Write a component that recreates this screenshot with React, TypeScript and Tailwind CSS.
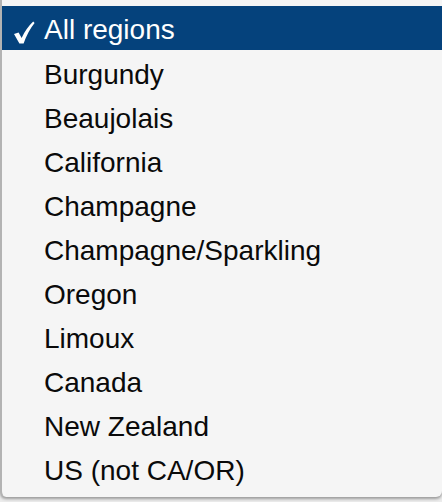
import React from "react";

const items = [
  "Burgundy",
  "Beaujolais",
  "California",
  "Champagne",
  "Champagne/Sparkling",
  "Oregon",
  "Limoux",
  "Canada",
  "New Zealand",
  "US (not CA/OR)",
];

export default function App() {
  return (
    <div
      className="w-[442px] h-[502px] bg-[#ececec] overflow-hidden"
      style={{ fontFamily: '"Liberation Sans", Arial, sans-serif' }}
    >
      <div className="h-[497px] bg-[#f5f5f5] border-l-2 border-[#b3b3b3] rounded-bl-[6px] rounded-br-[6px] pt-[6px] shadow-[0_2px_3px_rgba(0,0,0,0.35)]">
        <div className="h-[44px] bg-[#05427c] flex items-center text-white">
          <div className="w-[42px] h-[44px] relative shrink-0">
            <svg
              className="absolute left-[11px] top-[15px]"
              width="22"
              height="24"
              viewBox="0 0 22 24"
            >
              <path
                d="M1 13 L5.6 11.4 L8.6 17 Q13 7.5 20.2 0.6 L21.6 2 Q15 10 10.6 22.6 L6.4 22.6 Z"
                fill="white"
              />
            </svg>
          </div>
          <span className="text-[28px] leading-[44px] pt-[3px]">All regions</span>
        </div>
        {items.map((t) => (
          <div
            key={t}
            className="h-[44px] pl-[42px] text-[28px] leading-[44px] pt-[3px] text-[#0a0a0a]"
          >
            {t}
          </div>
        ))}
      </div>
    </div>
  );
}
